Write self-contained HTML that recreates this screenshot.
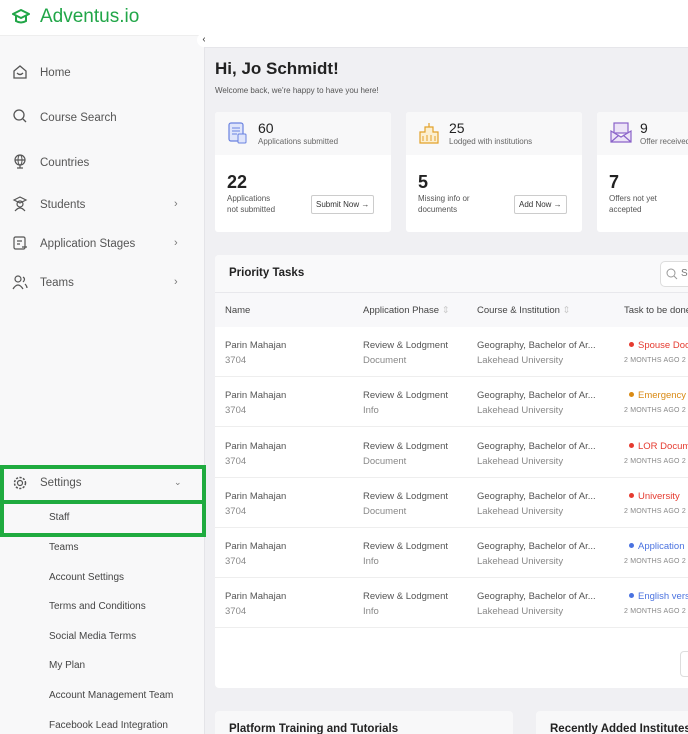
<!DOCTYPE html>
<html><head><meta charset="utf-8"><style>
*{box-sizing:border-box;margin:0;padding:0}
html,body{width:688px;height:734px;overflow:hidden}
body{font-family:"Liberation Sans",sans-serif;background:#f0f0f3;position:relative;color:#333}
.sb{position:absolute;left:0;top:0;width:205px;height:734px;background:#f8f8f9;border-right:1px solid #e4e4e8}
.logo{position:absolute;left:0;top:0;width:205px;height:36px;background:#fff;border-bottom:1px solid #eee}
.logo span{position:absolute;left:40px;top:6px;font-size:19px;color:#21a648}
.ni{position:absolute;left:40px;font-size:11.5px;color:#555}
.ic{position:absolute;left:12px;width:16px;height:16px}
.ch{position:absolute;left:174px;font-size:11px;color:#777}
.sub{position:absolute;left:49px;font-size:10px;color:#444}
.hl{position:absolute;border:4px solid #1fab3f}
.top{position:absolute;left:205px;top:0;width:483px;height:48px;background:#fff;border-bottom:1px solid #e6e6ea}
.card{position:absolute;top:112px;width:176px;height:120px;background:#fff;border-radius:3px;overflow:hidden}
.card .h{height:43px;background:#f8f8f9;position:relative}
.card .n1{position:absolute;left:43px;top:8px;font-size:14px;color:#222}
.card .l1{position:absolute;left:43px;top:25px;font-size:8px;color:#666}
.card .n2{position:absolute;left:12px;top:60px;font-size:18px;font-weight:bold;color:#222}
.card .l2{position:absolute;left:12px;top:81px;font-size:8px;color:#555;line-height:11px}
.btn{position:absolute;top:83px;height:19px;border:1px solid #ccc;border-radius:2px;font-size:8px;line-height:17px;padding:0 4px;color:#333;background:#fff}
.pt{position:absolute;left:215px;top:255px;width:490px;height:433px;background:#fff;border-radius:4px;overflow:hidden}
.row{position:absolute;left:0;width:490px;height:50px;border-bottom:1px solid #eee;font-size:9.5px;color:#555}
.row div{position:absolute}
.g{color:#888}
.dot{display:inline-block;width:5px;height:5px;border-radius:50%;margin-right:4px;vertical-align:1px}
.sm{font-size:7px;color:#888;letter-spacing:.2px}
.bp{position:absolute;top:711px;height:23px;background:#f8f8f9;border-radius:4px 4px 0 0}
.bp span{position:absolute;left:14px;top:12px;font-size:11.5px;font-weight:bold;color:#222}
</style></head><body>
<div class="sb">
<div class="logo">
<svg style="position:absolute;left:11px;top:9px" width="20" height="16" viewBox="0 0 20 16"><path d="M2 5 L10 1 L18 5 L10 9 Z" fill="none" stroke="#21a648" stroke-width="2" stroke-linejoin="round"/><path d="M5 7 V12 Q10 15 15 12 V7" fill="none" stroke="#21a648" stroke-width="2"/></svg>
<span>Adventus.io</span></div>
<div style="position:absolute;left:197px;top:33px;width:14px;height:14px;border-radius:50%;background:#fff;font-size:10px;text-align:center;line-height:14px;color:#333">‹</div>
<svg class="ic" style="top:64px" viewBox="0 0 16 16"><path d="M2 7 L8 2 L14 7 V14 H2 Z" fill="none" stroke="#555" stroke-width="1.3"/><path d="M5 9 Q8 12 11 9" fill="none" stroke="#555" stroke-width="1.3"/></svg><div class="ni" style="top:67px">Home</div>
<svg class="ic" style="top:108px" viewBox="0 0 16 16"><circle cx="7" cy="7" r="5" fill="none" stroke="#555" stroke-width="1.3"/><path d="M11 11 L14 14" stroke="#555" stroke-width="1.3"/></svg><div class="ni" style="top:112px">Course Search</div>
<svg class="ic" style="top:153px" viewBox="0 0 16 16"><circle cx="8" cy="7" r="5" fill="none" stroke="#555" stroke-width="1.2"/><ellipse cx="8" cy="7" rx="2" ry="5" fill="none" stroke="#555" stroke-width="1"/><path d="M3 7 H13 M5 15 H11 M8 12 V15" stroke="#555" stroke-width="1.2"/></svg><div class="ni" style="top:157px">Countries</div>
<svg class="ic" style="top:196px" viewBox="0 0 16 16"><path d="M2 4 L8 1 L14 4 L8 7 Z" fill="none" stroke="#555" stroke-width="1.2"/><circle cx="8" cy="8" r="3" fill="none" stroke="#555" stroke-width="1.2"/><path d="M3 15 Q8 9 13 15" fill="none" stroke="#555" stroke-width="1.2"/></svg><div class="ni" style="top:199px">Students</div><div class="ch" style="top:198px">›</div>
<svg class="ic" style="top:235px" viewBox="0 0 16 16"><rect x="2" y="2" width="11" height="12" rx="1.5" fill="none" stroke="#555" stroke-width="1.2"/><path d="M5 6 H10 M5 9 H8 M10 12 H15" stroke="#555" stroke-width="1.2"/></svg><div class="ni" style="top:238px">Application Stages</div><div class="ch" style="top:237px">›</div>
<svg class="ic" style="top:274px" viewBox="0 0 16 16"><circle cx="6" cy="5" r="3" fill="none" stroke="#555" stroke-width="1.2"/><path d="M1 15 Q6 7 11 15 M11 3 Q14 5 11 8 M13 10 Q15 12 15 14" fill="none" stroke="#555" stroke-width="1.2"/></svg><div class="ni" style="top:277px">Teams</div><div class="ch" style="top:276px">›</div>
<div class="hl" style="left:0;top:465px;width:206px;height:39px"></div>
<div class="hl" style="left:0;top:500px;width:206px;height:37px"></div>
<svg class="ic" style="top:475px" viewBox="0 0 16 16"><circle cx="8" cy="8" r="2.5" fill="none" stroke="#555" stroke-width="1.2"/><circle cx="8" cy="8" r="5.5" fill="none" stroke="#555" stroke-width="1.5" stroke-dasharray="2.2 1.4"/></svg>
<div class="ni" style="top:477px">Settings</div><div class="ch" style="top:477px;font-size:9px">⌄</div>
<div class="sub" style="top:512px">Staff</div>
<div class="sub" style="top:542px">Teams</div>
<div class="sub" style="top:572px">Account Settings</div>
<div class="sub" style="top:601px">Terms and Conditions</div>
<div class="sub" style="top:631px">Social Media Terms</div>
<div class="sub" style="top:660px">My Plan</div>
<div class="sub" style="top:690px">Account Management Team</div>
<div class="sub" style="top:720px">Facebook Lead Integration</div>
</div>
<div class="top"></div>
<div style="position:absolute;left:215px;top:59px;font-size:17px;font-weight:bold;color:#222">Hi, Jo Schmidt!</div>
<div style="position:absolute;left:215px;top:86px;font-size:8px;color:#555">Welcome back, we're happy to have you here!</div>

<div class="card" style="left:215px"><div class="h">
<svg style="position:absolute;left:12px;top:9px" width="22" height="24" viewBox="0 0 22 24"><rect x="2" y="2" width="14" height="18" rx="2" fill="#dfe5fb" stroke="#6a82e0" stroke-width="1.2"/><path d="M5 7 H13 M5 10 H13 M5 13 H10" stroke="#6a82e0"/><rect x="11" y="13" width="8" height="9" rx="1" fill="#dfe5fb" stroke="#6a82e0"/></svg>
<div class="n1">60</div><div class="l1">Applications submitted</div></div>
<div class="n2">22</div><div class="l2">Applications<br>not submitted</div><div class="btn" style="left:96px">Submit Now →</div></div>

<div class="card" style="left:406px"><div class="h">
<svg style="position:absolute;left:12px;top:9px" width="22" height="24" viewBox="0 0 22 24"><path d="M2 22 V11 H7 V6 H15 V11 H20 V22 Z M11 6 V2" fill="#fcefd0" stroke="#e3a22a" stroke-width="1.2"/><path d="M5 15 V20 M9 14 V20 M13 14 V20 M17 15 V20" stroke="#e3a22a"/></svg>
<div class="n1">25</div><div class="l1">Lodged with institutions</div></div>
<div class="n2">5</div><div class="l2">Missing info or<br>documents</div><div class="btn" style="left:108px">Add Now →</div></div>

<div class="card" style="left:597px"><div class="h">
<svg style="position:absolute;left:12px;top:9px" width="24" height="24" viewBox="0 0 24 24"><rect x="5" y="2" width="14" height="10" fill="#ece3f7" stroke="#8a62c9" stroke-width="1.2"/><path d="M2 10 V21 H22 V10 L12 16 Z M2 21 L10 14 M22 21 L14 14" fill="#ece3f7" stroke="#8a62c9" stroke-width="1.2"/></svg>
<div class="n1">9</div><div class="l1">Offer received</div></div>
<div class="n2">7</div><div class="l2">Offers not yet<br>accepted</div></div>

<div class="pt">
<div style="position:absolute;left:0;top:0;width:490px;height:38px;background:#f9f9fa;border-bottom:1px solid #e8e8ec"></div>
<div style="position:absolute;left:14px;top:12px;font-size:11.5px;font-weight:bold;color:#222">Priority Tasks</div>
<div style="position:absolute;left:445px;top:6px;width:50px;height:26px;border:1px solid #ddd;border-radius:5px;background:#fff;font-size:10px;color:#777;padding:6px 0 0 20px">S</div>
<svg style="position:absolute;left:451px;top:13px" width="12" height="12" viewBox="0 0 12 12"><circle cx="5" cy="5" r="4" fill="none" stroke="#999"/><path d="M8 8 L11 11" stroke="#999"/></svg>
<div style="position:absolute;left:0;top:38px;width:490px;height:34px;background:#f8f8fa;font-size:9.5px;color:#444">
<div style="position:absolute;left:10px;top:12px">Name</div>
<div style="position:absolute;left:148px;top:12px">Application Phase <span style="color:#ccc">⇕</span></div>
<div style="position:absolute;left:262px;top:12px">Course &amp; Institution <span style="color:#ccc">⇕</span></div>
<div style="position:absolute;left:409px;top:12px">Task to be done</div></div>

<div class="row" style="top:72px"><div style="left:10px;top:13px">Parin Mahajan</div><div class="g" style="left:10px;top:28px">3704</div><div style="left:148px;top:13px">Review &amp; Lodgment</div><div class="g" style="left:148px;top:28px">Document</div><div style="left:262px;top:13px">Geography, Bachelor of Ar...</div><div class="g" style="left:262px;top:28px">Lakehead University</div><div style="left:414px;top:13px;color:#e53a2f;white-space:nowrap"><span class="dot" style="background:#e53a2f"></span>Spouse Documents</div><div class="sm" style="left:409px;top:30px;white-space:nowrap">2 MONTHS AGO 2</div></div>
<div class="row" style="top:122px"><div style="left:10px;top:13px">Parin Mahajan</div><div class="g" style="left:10px;top:28px">3704</div><div style="left:148px;top:13px">Review &amp; Lodgment</div><div class="g" style="left:148px;top:28px">Info</div><div style="left:262px;top:13px">Geography, Bachelor of Ar...</div><div class="g" style="left:262px;top:28px">Lakehead University</div><div style="left:414px;top:13px;color:#d98a14;white-space:nowrap"><span class="dot" style="background:#d98a14"></span>Emergency</div><div class="sm" style="left:409px;top:30px;white-space:nowrap">2 MONTHS AGO 2</div></div>
<div class="row" style="top:173px"><div style="left:10px;top:13px">Parin Mahajan</div><div class="g" style="left:10px;top:28px">3704</div><div style="left:148px;top:13px">Review &amp; Lodgment</div><div class="g" style="left:148px;top:28px">Document</div><div style="left:262px;top:13px">Geography, Bachelor of Ar...</div><div class="g" style="left:262px;top:28px">Lakehead University</div><div style="left:414px;top:13px;color:#e53a2f;white-space:nowrap"><span class="dot" style="background:#e53a2f"></span>LOR Document</div><div class="sm" style="left:409px;top:30px;white-space:nowrap">2 MONTHS AGO 2</div></div>
<div class="row" style="top:223px"><div style="left:10px;top:13px">Parin Mahajan</div><div class="g" style="left:10px;top:28px">3704</div><div style="left:148px;top:13px">Review &amp; Lodgment</div><div class="g" style="left:148px;top:28px">Document</div><div style="left:262px;top:13px">Geography, Bachelor of Ar...</div><div class="g" style="left:262px;top:28px">Lakehead University</div><div style="left:414px;top:13px;color:#e53a2f;white-space:nowrap"><span class="dot" style="background:#e53a2f"></span>University</div><div class="sm" style="left:409px;top:30px;white-space:nowrap">2 MONTHS AGO 2</div></div>
<div class="row" style="top:273px"><div style="left:10px;top:13px">Parin Mahajan</div><div class="g" style="left:10px;top:28px">3704</div><div style="left:148px;top:13px">Review &amp; Lodgment</div><div class="g" style="left:148px;top:28px">Info</div><div style="left:262px;top:13px">Geography, Bachelor of Ar...</div><div class="g" style="left:262px;top:28px">Lakehead University</div><div style="left:414px;top:13px;color:#4a72e0;white-space:nowrap"><span class="dot" style="background:#4a72e0"></span>Application</div><div class="sm" style="left:409px;top:30px;white-space:nowrap">2 MONTHS AGO 2</div></div>
<div class="row" style="top:323px"><div style="left:10px;top:13px">Parin Mahajan</div><div class="g" style="left:10px;top:28px">3704</div><div style="left:148px;top:13px">Review &amp; Lodgment</div><div class="g" style="left:148px;top:28px">Info</div><div style="left:262px;top:13px">Geography, Bachelor of Ar...</div><div class="g" style="left:262px;top:28px">Lakehead University</div><div style="left:414px;top:13px;color:#4a72e0;white-space:nowrap"><span class="dot" style="background:#4a72e0"></span>English version</div><div class="sm" style="left:409px;top:30px;white-space:nowrap">2 MONTHS AGO 2</div></div>
<div style="position:absolute;left:465px;top:396px;width:30px;height:26px;border:1px solid #ddd;border-radius:4px"></div>
</div>

<div class="bp" style="left:215px;width:298px"><span>Platform Training and Tutorials</span></div>
<div class="bp" style="left:536px;width:160px"><span style="white-space:nowrap">Recently Added Institutes</span></div>
</body></html>
